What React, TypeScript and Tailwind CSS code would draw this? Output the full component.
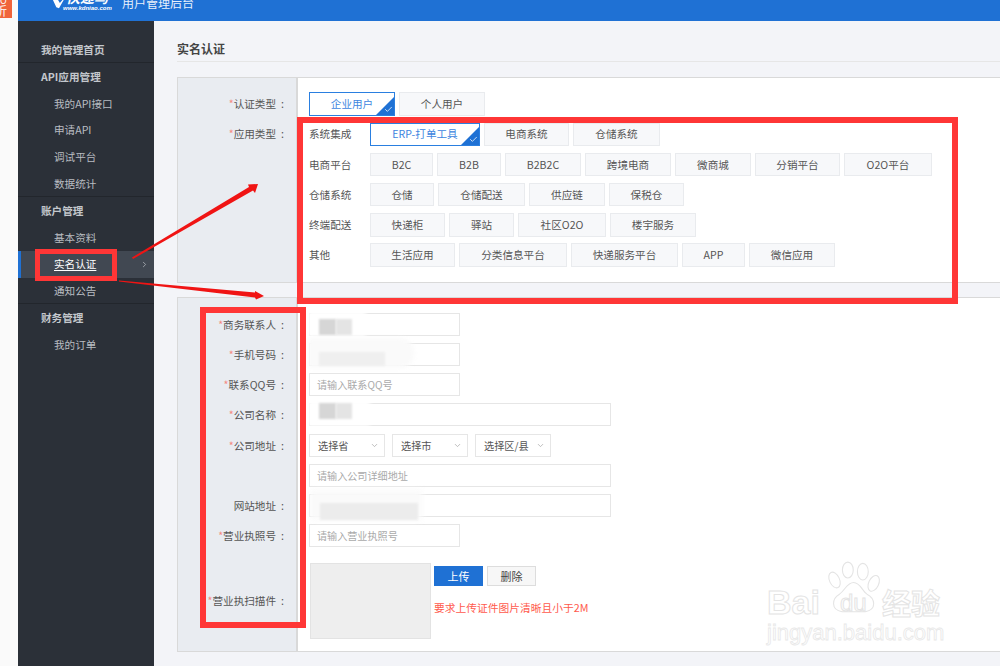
import React from "react";
import { ChevronRight, ChevronDown, Check } from "lucide-react";

function Opt({ w, children, active }: { w: string; children: React.ReactNode; active?: boolean }) {
  return (
    <div
      className={`${w} h-[23.4px] shrink-0 relative flex items-center justify-center text-[10.6px] overflow-hidden ${
        active ? "border border-[#2a7fe0] bg-white text-[#3d85e0]" : "border border-[#e9ebee] bg-[#f7f8fa] text-[#555]"
      }`}
    >
      {children}
      {active && (
        <>
          <div className="absolute right-0 bottom-0 w-0 h-0 border-l-[18px] border-l-transparent border-b-[18px] border-b-[#1f71d4]" />
          <Check className="absolute right-[1px] bottom-[1px] text-white" size={9} strokeWidth={2} />
        </>
      )}
    </div>
  );
}

function SubRow({ label, children }: { label: string; children: React.ReactNode }) {
  return (
    <div className="flex items-center h-[23.4px] mb-[6.8px]">
      <div className="w-[61px] text-[10.6px] text-[#555] shrink-0">{label}</div>
      <div className="flex gap-[4px]">{children}</div>
    </div>
  );
}

function Label({ text, star = true }: { text: string; star?: boolean }) {
  return (
    <>
      {star && <span className="text-[#f58a80]">*</span>}
      {text}
      <span className="ml-[5px]">:</span>
    </>
  );
}

const labelCol = "w-[120px] shrink-0 bg-[#e9ecf1] border-r-2 border-[#d9d9d9] text-right pr-[12px] text-[10.6px] text-[#555]";

function Row({ label, star = true, h = "h-[30px]", children }: { label?: string; star?: boolean; h?: string; children: React.ReactNode }) {
  return (
    <div className={`flex ${h}`}>
      <div className={`${labelCol} pt-[4px]`}>{label && <Label text={label} star={star} />}</div>
      <div className="flex-1 bg-white pl-[11px]">{children}</div>
    </div>
  );
}

function Input({ w, ph }: { w: string; ph?: string }) {
  return (
    <div className={`${w} h-[23px] border border-[#e6e6e6] bg-white flex items-center pl-[7px] text-[10.1px] text-[#aaa]`}>{ph}</div>
  );
}

function Sel({ label }: { label: string }) {
  return (
    <div className="w-[76px] h-[23px] border border-[#e6e6e6] bg-white flex items-center justify-between pl-[8px] pr-[5px] text-[10.2px] text-[#555] whitespace-nowrap">
      <span>{label}</span>
      <ChevronDown size={9} className="text-[#aaa] shrink-0" />
    </div>
  );
}

function NavGroup({ title, border = true, items }: { title: string; border?: boolean; items?: React.ReactNode }) {
  return (
    <div className={border ? "shadow-[inset_0_-1px_0_#22262c]" : ""}>
      <div className="h-[26.8px] flex items-center pl-[23px] text-[10.6px] font-bold text-[#c3c7cc]">{title}</div>
      {items}
    </div>
  );
}

function NavItem({ label, active }: { label: string; active?: boolean }) {
  if (active) {
    return (
      <div className="h-[26.8px] flex items-center pl-[33px] pr-[5px] bg-[#414852] border-l-[3px] border-[#1f71d4] text-[10.6px] text-white justify-between">
        <span className="underline underline-offset-2">{label}</span>
        <ChevronRight size={9} className="text-[#b5b9bf]" />
      </div>
    );
  }
  return <div className="h-[26.8px] flex items-center pl-[36px] text-[10.6px] text-[#b9bdc2]">{label}</div>;
}

export default function App() {
  return (
    <div className="relative w-[1000px] h-[666px] overflow-hidden flex bg-white font-['Noto_Sans_CJK_SC','Noto_Sans',sans-serif]">
      {/* left strip */}
      <div className="w-[18px] shrink-0 bg-[#fafafa]">
        <div className="w-[12px] h-[18px] bg-[#f0643c] text-white overflow-hidden">
          <div className="w-[8px] h-[6px] overflow-hidden text-[9px] leading-[8px] -mt-[1px] flex items-end">O</div>
          <div className="text-[12px] leading-[12px] -ml-[5px] whitespace-nowrap">折</div>
        </div>
      </div>

      <div className="flex-1 flex flex-col min-w-0">
        {/* header */}
        <div className="h-[21px] shrink-0 bg-[#1f71d4] flex items-start overflow-hidden">
          <div className="relative w-[104px] h-[21px] shrink-0">
            <svg className="absolute left-[33px] top-[-5px]" width="16" height="14" viewBox="0 0 18 14">
              <path d="M0 0 L5 0 L10 8 L17 0 L9 14 L6 13 Z" fill="#fff" />
            </svg>
            <span className="absolute left-[48px] top-[-11px] text-[14px] font-bold italic text-white leading-[16px]">快递鸟</span>
            <span className="absolute left-[45px] top-[5px] text-[6px] text-white leading-[6px] font-bold italic font-['Liberation_Sans',sans-serif] whitespace-nowrap">www.kdniao.com</span>
          </div>
          <span className="text-[#e8f0fb] text-[12px] leading-[14px] -mt-[4px]">用户管理后台</span>
        </div>

        <div className="flex-1 flex min-h-0">
          {/* sidebar */}
          <div className="w-[136px] shrink-0 bg-[#2b3038] pt-[15.5px]">
            <NavGroup title="我的管理首页" />
            <NavGroup
              title="API应用管理"
              items={
                <>
                  <NavItem label="我的API接口" />
                  <NavItem label="申请API" />
                  <NavItem label="调试平台" />
                  <NavItem label="数据统计" />
                </>
              }
            />
            <NavGroup
              title="账户管理"
              items={
                <>
                  <NavItem label="基本资料" />
                  <NavItem label="实名认证" active />
                  <NavItem label="通知公告" />
                </>
              }
            />
            <NavGroup title="财务管理" border={false} items={<NavItem label="我的订单" />} />
          </div>

          {/* main */}
          <div className="flex-1 bg-[#f3f4f8] pl-[23px]">
            <div className="h-[41px] border-b border-[#e6e6e6] text-[12px] leading-[18px] font-bold text-[#444] pt-[19px]">实名认证</div>

            {/* panel 1 */}
            <div className="mt-[15px] h-[206px] border border-[#d9d9d9] border-r-0 flex">
              <div className={`${labelCol} pt-[14px]`}>
                <div className="h-[24px] mb-[6px] flex items-center justify-end"><span><Label text="认证类型" /></span></div>
                <div className="h-[24px] flex items-center justify-end"><span><Label text="应用类型" /></span></div>
              </div>
              <div className="flex-1 bg-white pl-[11px] pt-[14.3px]">
                <div className="flex gap-[4px] mb-[7px]">
                  <Opt w="w-[86px]" active>企业用户</Opt>
                  <Opt w="w-[86px]">个人用户</Opt>
                </div>
                <SubRow label="系统集成">
                  <Opt w="w-[110px]" active>ERP-打单工具</Opt>
                  <Opt w="w-[85px]">电商系统</Opt>
                  <Opt w="w-[87px]">仓储系统</Opt>
                </SubRow>
                <SubRow label="电商平台">
                  <Opt w="w-[63px]">B2C</Opt>
                  <Opt w="w-[64px]">B2B</Opt>
                  <Opt w="w-[76px]">B2B2C</Opt>
                  <Opt w="w-[86px]">跨境电商</Opt>
                  <Opt w="w-[76px]">微商城</Opt>
                  <Opt w="w-[85px]">分销平台</Opt>
                  <Opt w="w-[88px]">O2O平台</Opt>
                </SubRow>
                <SubRow label="仓储系统">
                  <Opt w="w-[64px]">仓储</Opt>
                  <Opt w="w-[87px]">仓储配送</Opt>
                  <Opt w="w-[76px]">供应链</Opt>
                  <Opt w="w-[75px]">保税仓</Opt>
                </SubRow>
                <SubRow label="终端配送">
                  <Opt w="w-[75px]">快递柜</Opt>
                  <Opt w="w-[65px]">驿站</Opt>
                  <Opt w="w-[88px]">社区O2O</Opt>
                  <Opt w="w-[86px]">楼宇服务</Opt>
                </SubRow>
                <SubRow label="其他">
                  <Opt w="w-[85px]">生活应用</Opt>
                  <Opt w="w-[108px]">分类信息平台</Opt>
                  <Opt w="w-[107px]">快递服务平台</Opt>
                  <Opt w="w-[63px]">APP</Opt>
                  <Opt w="w-[86px]">微信应用</Opt>
                </SubRow>
              </div>
            </div>

            {/* panel 2 */}
            <div className="mt-[14px] h-[355px] border border-[#d9d9d9] border-r-0 flex flex-col">
              <div className="flex h-[15px]">
                <div className="w-[120px] bg-[#e9ecf1] border-r-2 border-[#d9d9d9]" />
                <div className="flex-1 bg-white" />
              </div>
              <Row label="商务联系人"><Input w="w-[151px]" /></Row>
              <Row label="手机号码"><Input w="w-[151px]" /></Row>
              <Row label="联系QQ号"><Input w="w-[151px]" ph="请输入联系QQ号" /></Row>
              <Row label="公司名称" h="h-[31px]"><Input w="w-[302px]" /></Row>
              <Row label="公司地址">
                <div className="flex gap-[7px]">
                  <Sel label="选择省" />
                  <Sel label="选择市" />
                  <Sel label="选择区/县" />
                </div>
              </Row>
              <Row><Input w="w-[302px]" ph="请输入公司详细地址" /></Row>
              <Row label="网站地址" star={false}><Input w="w-[302px]" /></Row>
              <Row label="营业执照号" h="h-[39px]"><Input w="w-[151px]" ph="请输入营业执照号" /></Row>
              <div className="flex flex-1">
                <div className={`${labelCol} pt-[30px]`}><Label text="营业执扫描件" /></div>
                <div className="flex-1 bg-white pl-[12px] flex gap-[3px]">
                  <div className="w-[121px] h-[76px] bg-[#eee] border border-[#e3e3e3] shrink-0" />
                  <div className="flex flex-col pt-[3px]">
                    <div className="flex gap-[4px]">
                      <div className="w-[49px] h-[20px] bg-[#1f71d4] text-white text-[11px] flex items-center justify-center">上传</div>
                      <div className="w-[49px] h-[20px] bg-[#f7f7f7] border border-[#ddd] text-[#444] text-[11px] flex items-center justify-center">删除</div>
                    </div>
                    <div className="mt-[14px] text-[10.75px] text-[#ff5a4d] whitespace-nowrap">要求上传证件图片清晰且小于2M</div>
                  </div>
                </div>
              </div>
            </div>
          </div>
        </div>
      </div>

      {/* redaction smudges over the fields */}
      <div className="absolute left-[308px] top-[311px] w-[58px] h-[26px] bg-white blur-[2px]" />
      <div className="absolute left-[319px] top-[319px] w-[17px] h-[16px] bg-[#d6d6d6] blur-[1px]" />
      <div className="absolute left-[336px] top-[319px] w-[16px] h-[16px] bg-[#e4e4e4] blur-[1px]" />
      <div className="absolute left-[308px] top-[338px] w-[106px] h-[30px] bg-[#fafafa] blur-[2px] rounded-r-[14px]" />
      <div className="absolute left-[319px] top-[352px] w-[66px] h-[14px] bg-[#efefef] blur-[1px]" />
      <div className="absolute left-[308px] top-[400px] w-[62px] h-[26px] bg-white blur-[2px]" />
      <div className="absolute left-[319px] top-[403px] w-[17px] h-[16px] bg-[#d6d6d6] blur-[1px]" />
      <div className="absolute left-[336px] top-[403px] w-[16px] h-[16px] bg-[#e4e4e4] blur-[1px]" />
      <div className="absolute left-[310px] top-[490px] w-[112px] h-[30px] bg-[#fafafa] blur-[3px]" />
      <div className="absolute left-[320px] top-[503px] w-[98px] h-[17px] bg-[#ececec] blur-[1px]" />

      {/* watermark */}
      <div className="absolute left-[765px] top-[559px] w-[200px] h-[90px] text-transparent select-none">
        <div className="absolute left-[2px] top-[24px] text-[34px] leading-[38px] font-bold font-['Liberation_Sans',sans-serif] [-webkit-text-stroke:1px_#e4e4e4]">Bai</div>
        <svg className="absolute left-[62px] top-0" width="55" height="57" viewBox="0 0 66 62" fill="none" stroke="#e4e4e4" strokeWidth="1.3">
          <ellipse cx="9" cy="22" rx="6" ry="10" transform="rotate(-25 9 22)" />
          <ellipse cx="25" cy="10" rx="6.5" ry="9.5" />
          <ellipse cx="43" cy="12" rx="6.5" ry="10" />
          <ellipse cx="56" cy="26" rx="6" ry="10" transform="rotate(25 56 26)" />
          <path d="M32 25 C24 25 22 34 15 39 C6 44 4 58 18 60 L46 60 C60 58 58 44 48 39 C42 35 40 25 32 25 Z" />
        </svg>
        <div className="absolute left-[75px] top-[31px] text-[24px] leading-[26px] font-['Liberation_Sans',sans-serif] [-webkit-text-stroke:1px_#e4e4e4]">du</div>
        <div className="absolute left-[117px] top-[25px] text-[29px] leading-[36px] font-bold [-webkit-text-stroke:1px_#e4e4e4]">经验</div>
        <div className="absolute left-[2px] top-[61px] text-[22px] leading-[26px] font-['Liberation_Sans',sans-serif] whitespace-nowrap [-webkit-text-stroke:0.8px_#e8e8e8]">jingyan.baidu.com</div>
      </div>

      {/* annotations */}
      <div className="absolute left-[35px] top-[249px] w-[82px] h-[32px] border-[5px] border-[#ff3636]" />
      <div className="absolute left-[297px] top-[117px] w-[661px] h-[187px] border-[6px] border-[#ff3636]" />
      <div className="absolute left-[200px] top-[307px] w-[106px] h-[321px] border-[6px] border-[#ff3636]" />
      <svg className="absolute left-0 top-0 pointer-events-none" width="1000" height="666">
        <path d="M132 257.5 L249 187 L248 184.5 L258 184 L255 193 L253 190.5 L133 259 Z" fill="#f01414" />
        <path d="M119 280.5 L255 292.5 L255 291 L264 296 L256 299.5 L255 297.5 L119 281.5 Z" fill="#f01414" />
      </svg>
    </div>
  );
}
